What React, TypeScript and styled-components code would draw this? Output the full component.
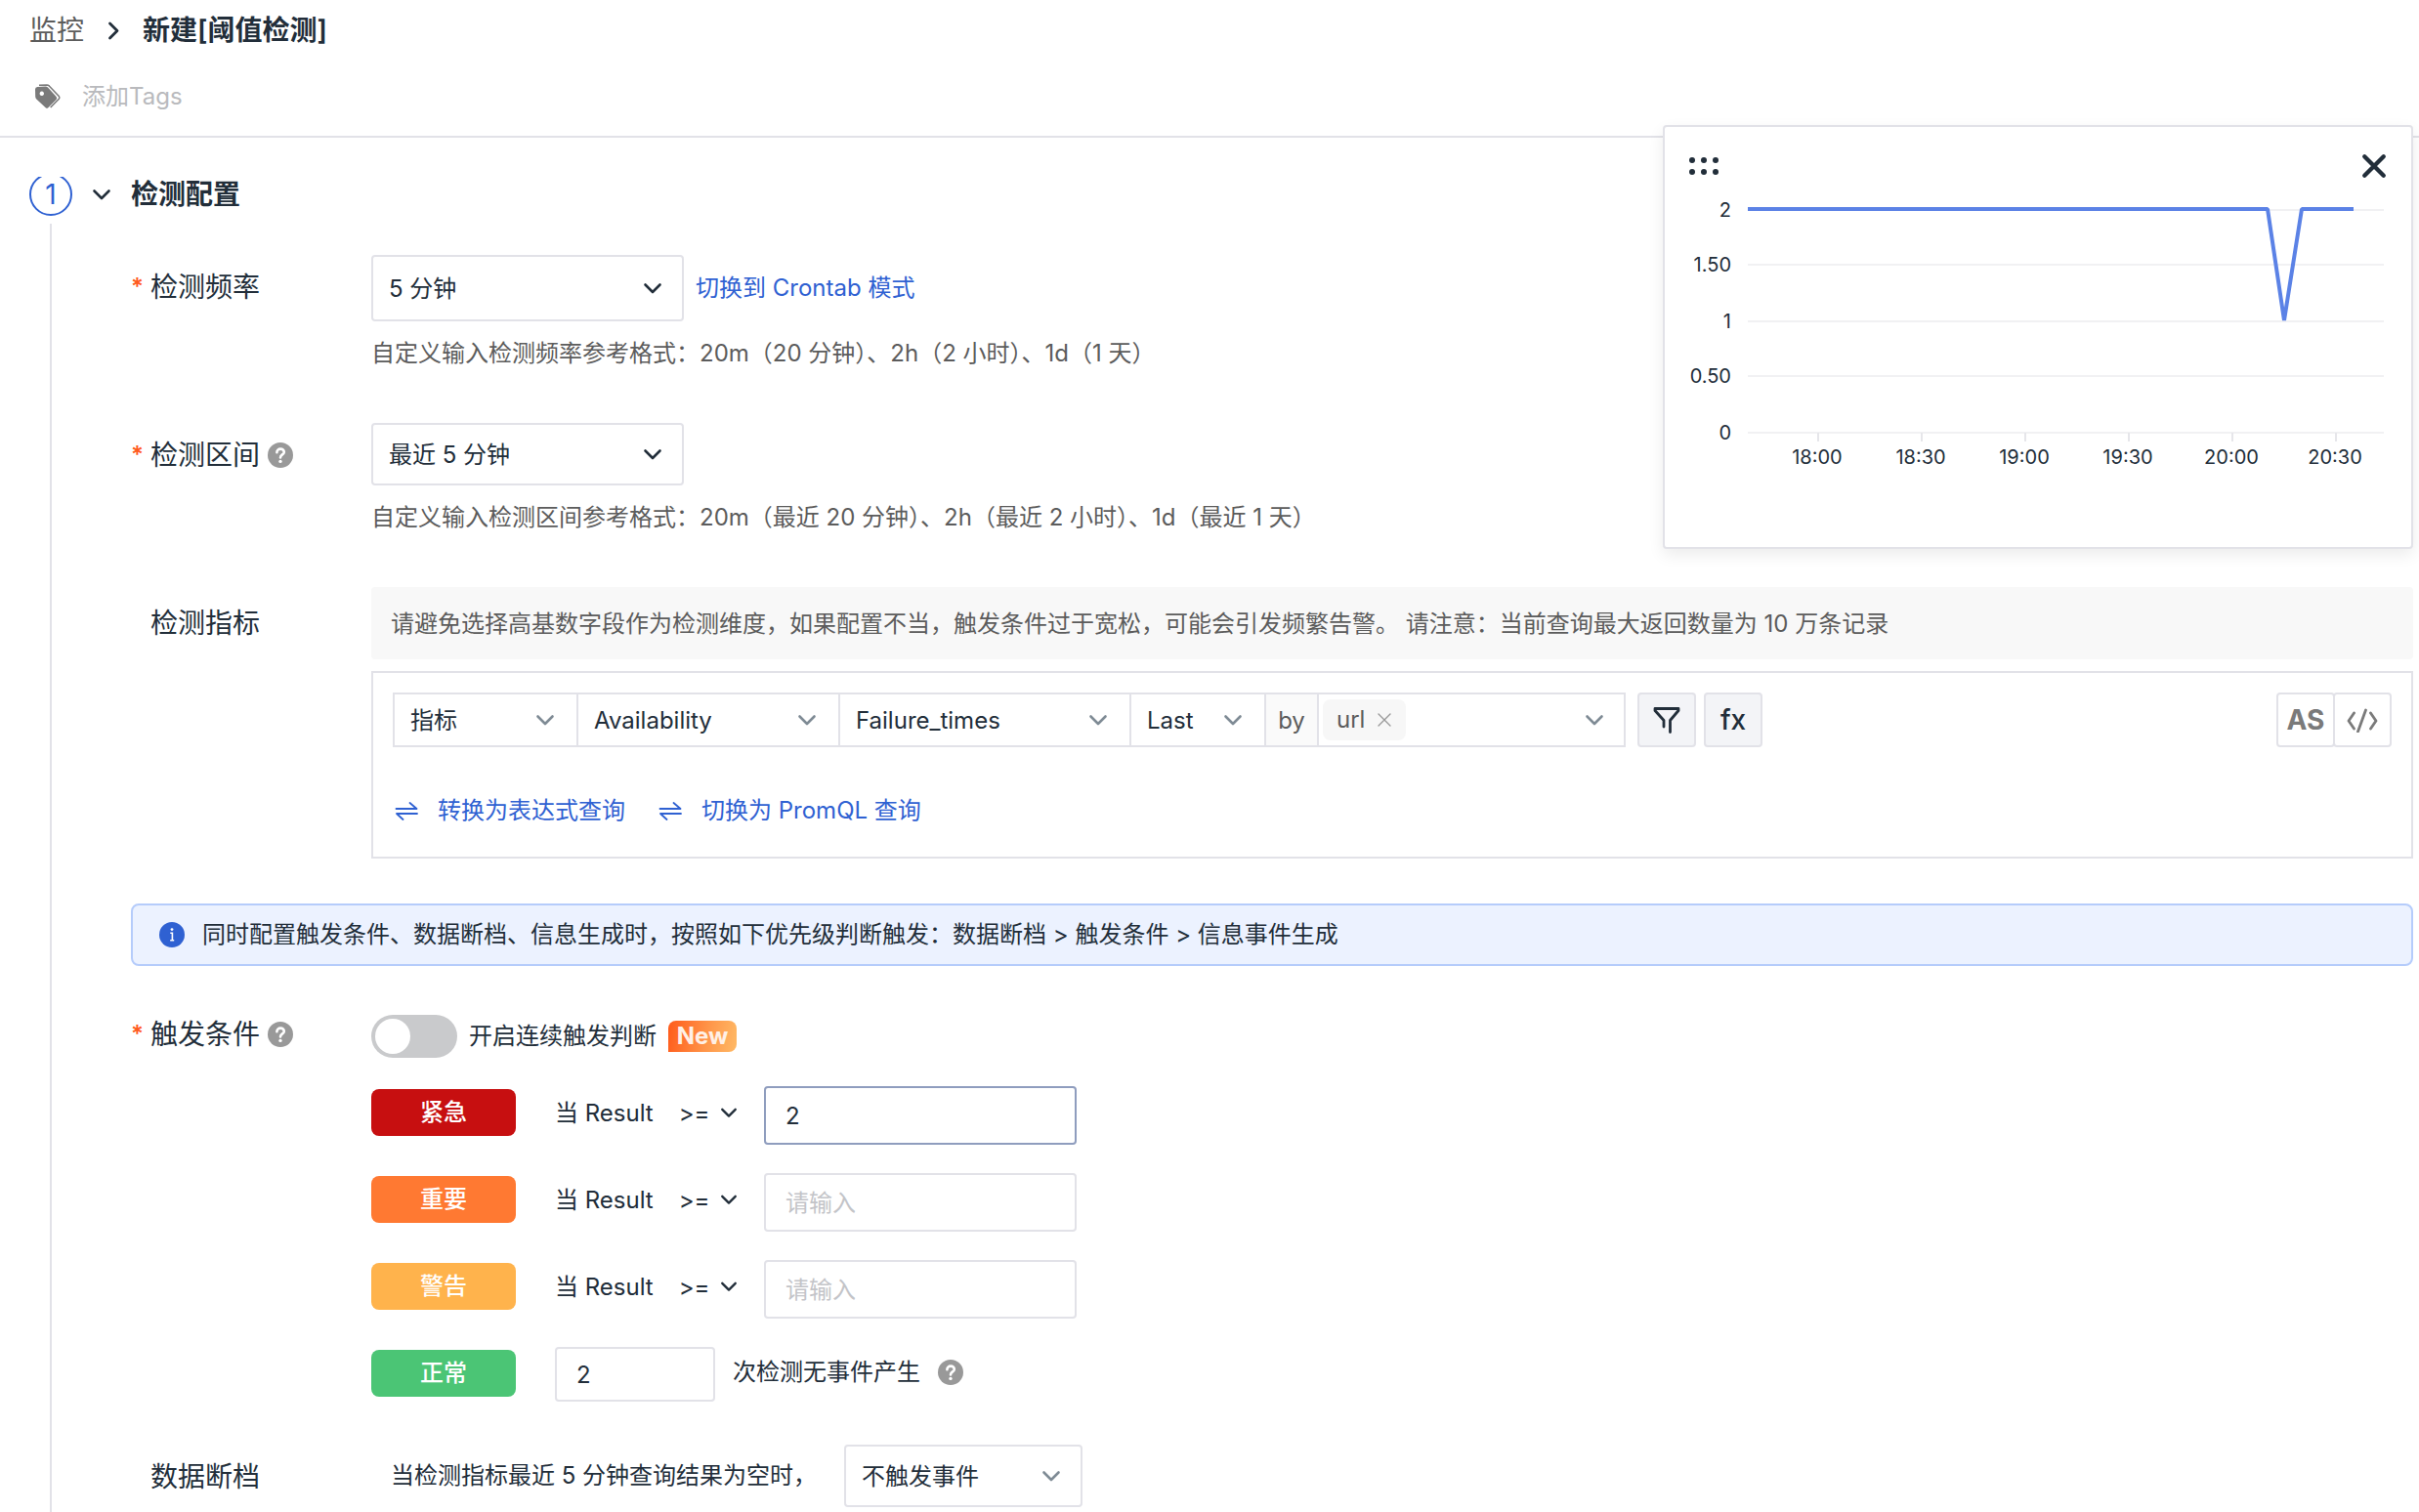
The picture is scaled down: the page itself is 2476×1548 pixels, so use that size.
import React from "react";
import styled, { createGlobalStyle } from "styled-components";

const color = {
  ink: "#222e3a",
  muted: "#5c5c5c",
  faint: "#b9babd",
  line: "#e2e2e8",
  blue: "#2f61d2",
  grey: "#7a7a7a",
  arrow: "#7f8b95",
};

const GlobalStyle = createGlobalStyle`
  *, *::before, *::after { box-sizing: border-box; }
  body { margin: 0; background: #fff; }
  body, button, input, select {
    font-family: Inter, "Noto Sans CJK SC", sans-serif;
    font-size: 24px;
    line-height: 32px;
    color: ${color.ink};
  }
  button { border: 0; padding: 0; background: none; cursor: pointer; }
  svg { display: block; flex: none; }
`;

/* ---------- icons ---------- */

const Stroke = styled.svg`
  fill: none;
  stroke: currentColor;
  stroke-linecap: round;
  stroke-linejoin: round;
`;

const ChevronDown = ({ size = 20 }: { size?: number }) => (
  <Stroke width={size} height={size} viewBox="0 0 20 20" strokeWidth="2.600" aria-hidden="true">
    <path d="M2.500 6.500 10 14 17.500 6.500" />
  </Stroke>
);

const ChevronRight = () => (
  <Stroke width="20" height="20" viewBox="0 0 20 20" strokeWidth="2.800" aria-hidden="true">
    <path d="M6.500 3 14 10.500 6.500 18" />
  </Stroke>
);

const TagIcon = () => (
  <svg width="28" height="26" viewBox="0 0 28 26" aria-hidden="true">
    <path
      fillRule="evenodd"
      fill={color.grey}
      d="M0 5.500Q0 3.200 2.300 3L10.500 2.600Q12 2.600 13 3.600L21.600 13Q22.800 14.500 21.600 15.900L13.300 24.300Q12 25.400 10.700 24.300L1.300 15.500Q.2 14.400 .2 13ZM6.800 7.600a2.200 2.200 0 1 0 .01 0Z"
    />
    <path d="M4 1.200 12 .9Q13.300 .9 14.300 1.900L24.300 12.600Q25.500 14 24.300 15.300L15.700 24" fill="none" stroke={color.grey} strokeWidth="1.500" />
  </svg>
);

const HelpIcon = () => (
  <svg width="26" height="26" viewBox="0 0 26 26" aria-hidden="true">
    <circle cx="13" cy="13" r="13" fill="#999" />
    <path
      d="M9.400 10.200C9.400 8 11 6.600 13.100 6.600S16.800 8 16.800 9.900C16.800 12.400 13 12.500 13 15.400"
      fill="none"
      stroke="#fff"
      strokeWidth="2.600"
      strokeLinecap="round"
    />
    <circle cx="13" cy="19.400" r="1.700" fill="#fff" />
  </svg>
);

const InfoIcon = () => (
  <svg width="26" height="26" viewBox="0 0 26 26" aria-hidden="true">
    <circle cx="13" cy="13" r="13" fill={color.blue} />
    <circle cx="13" cy="7.600" r="1.400" fill="#fff" />
    <path d="M11.300 11.200H13.400V18.600M11.200 18.700H15.200" fill="none" stroke="#fff" strokeWidth="1.600" />
  </svg>
);

const SwapIcon = () => (
  <Stroke width="26" height="20" viewBox="0 0 26 20" strokeWidth="1.800" aria-hidden="true">
    <path d="M3.500 8H24.500L17.500 2M25 13H4L10.500 19" />
  </Stroke>
);

const FilterIcon = () => (
  <Stroke width="28" height="28" viewBox="0 0 28 28" strokeWidth="2.800" aria-hidden="true">
    <path d="M11 21V14.500L2 4.500V2.500H26V4.500L17.500 14.500V26.500" />
  </Stroke>
);

const CodeIcon = () => (
  <Stroke width="32" height="26" viewBox="0 0 32 26" strokeWidth="2.800" aria-hidden="true">
    <path d="M7.500 6 2 14 7.500 22M19.500 3 11.500 25M24.500 6 30 14 24.500 22" />
  </Stroke>
);

const CloseIcon = ({ size, weight }: { size: number; weight: number }) => (
  <Stroke width={size} height={size} viewBox="0 0 24 24" strokeWidth={weight} aria-hidden="true">
    <path d="M3 3 21 21M21 3 3 21" />
  </Stroke>
);

const DragIcon = () => (
  <svg width="30" height="18" viewBox="0 0 30 18" fill="currentColor" aria-hidden="true">
    {[3, 15, 27].map((x) => [3, 15].map((y) => <circle key={`${x}-${y}`} cx={x} cy={y} r="3" />))}
  </svg>
);

/* ---------- page frame ---------- */

const Page = styled.div`
  position: relative;
  display: flex;
  flex-direction: column;
  min-height: 100vh;
`;

const Header = styled.header`
  display: flex;
  flex-direction: column;
  gap: 28px;
  padding: 11px 30px 20px;
  border-bottom: 2px solid ${color.line};
`;

const Breadcrumb = styled.nav`
  display: flex;
  align-items: center;
  gap: 20px;
  height: 40px;
  font-size: 28px;
  a { color: ${color.muted}; text-decoration: none; }
`;

const PageTitle = styled.h1`
  margin: 0;
  font-size: 28px;
  font-weight: 600;
`;

const TagField = styled.label`
  display: flex;
  align-items: center;
  gap: 20px;
  height: 40px;
  padding-left: 6px;
  input {
    flex: 1;
    border: 0;
    outline: 0;
    padding: 0;
    background: none;
  }
  input::placeholder { color: ${color.faint}; opacity: 1; }
`;

const Step = styled.main`
  flex: 1;
  display: grid;
  grid-template-columns: 44px minmax(0, 1fr);
  column-gap: 20px;
  padding: 40px 6px 0 30px;
`;

const Rail = styled.div`
  display: flex;
  flex-direction: column;
  align-items: center;
  gap: 8px;
`;

const StepBadge = styled.div`
  display: flex;
  align-items: flex-end;
  height: 40px;
  overflow: hidden;
  span {
    display: grid;
    place-items: center;
    flex: none;
    width: 44px;
    height: 44px;
    border: 2px solid ${color.blue};
    border-radius: 50%;
    color: ${color.blue};
    font-size: 28px;
  }
`;

const RailLine = styled.div`
  flex: 1;
  width: 2px;
  background: ${color.line};
`;

const SectionHead = styled.div`
  display: flex;
  align-items: center;
  gap: 20px;
  height: 36px;
  margin-bottom: 44px;
  h2 { margin: 0; font-size: 28px; font-weight: 600; }
`;

const Body = styled.form`
  display: flex;
  flex-direction: column;
  padding: 0 0 3px 40px;
`;

/* ---------- form rows ---------- */

const Row = styled.div<{ $after?: number }>`
  display: grid;
  grid-template-columns: 246px minmax(0, 1fr);
  align-items: start;
  margin-bottom: ${(p) => p.$after ?? 0}px;
`;

const RowLabel = styled.div<{ $height?: number }>`
  display: flex;
  align-items: center;
  gap: 8px;
  height: ${(p) => p.$height ?? 66}px;
  font-size: 28px;
`;

const LabelText = styled.label<{ $required?: boolean }>`
  display: flex;
  align-items: center;
  &::before {
    content: "${(p) => (p.$required ? "*" : "")}";
    width: 20px;
    color: #ff5a1f;
    font-size: 24px;
    font-weight: 600;
  }
`;

const Stack = styled.div<{ $gap: number }>`
  display: flex;
  flex-direction: column;
  gap: ${(p) => p.$gap}px;
`;

const Inline = styled.div<{ $gap: number }>`
  display: flex;
  align-items: center;
  gap: ${(p) => p.$gap}px;
`;

const Hint = styled.p`
  margin: 0;
  color: ${color.muted};
`;

const LinkButton = styled.button`
  display: flex;
  align-items: center;
  gap: 20px;
  color: ${color.blue};
`;

const SelectBox = styled.div<{ $width: number; $height: number; $muted?: boolean }>`
  position: relative;
  flex: none;
  width: ${(p) => p.$width}px;
  height: ${(p) => p.$height}px;
  select {
    appearance: none;
    width: 100%;
    height: 100%;
    padding: 2px 48px 0 16px;
    border: 2px solid ${color.line};
    border-radius: 4px;
    background: #fff;
    outline: 0;
  }
  svg {
    position: absolute;
    right: 22px;
    top: calc(50% - 10px);
    pointer-events: none;
    color: ${(p) => (p.$muted ? color.arrow : color.ink)};
  }
`;

type PickerProps = {
  id?: string;
  label?: string;
  value: string;
  width: number;
  height: number;
  muted?: boolean;
};

const Picker = ({ id, label, value, width, height, muted }: PickerProps) => (
  <SelectBox $width={width} $height={height} $muted={muted}>
    <select id={id} aria-label={label} defaultValue={value}>
      <option>{value}</option>
    </select>
    <ChevronDown />
  </SelectBox>
);

/* ---------- metric query ---------- */

const Notice = styled.p`
  margin: 0;
  padding: 22px 20px 20px;
  border-radius: 4px;
  background: #f8f8f8;
  color: ${color.muted};
`;

const QueryBox = styled.div`
  display: flex;
  flex-direction: column;
  gap: 49px;
  padding: 20px 20px 31px;
  border: 2px solid ${color.line};
`;

const QueryBar = styled.div`
  display: flex;
  gap: 8px;
`;

const QueryFields = styled.div`
  display: flex;
  margin-right: 4px;
  border: 2px solid ${color.line};
  border-left: 0;
  > * { border-left: 2px solid ${color.line}; }
  select { border: 0; border-radius: 0; }
`;

const ByLabel = styled.span`
  display: grid;
  place-items: center;
  width: 54px;
  padding-top: 2px;
  background: #fafafa;
  color: ${color.muted};
`;

const GroupField = styled.div`
  display: flex;
  align-items: center;
  justify-content: space-between;
  width: 314px;
  padding: 0 20px 0 4px;
  > button { color: ${color.arrow}; }
`;

const Token = styled.span`
  display: flex;
  align-items: center;
  gap: 12px;
  height: 42px;
  padding: 0 14px;
  border-radius: 8px;
  background: #f7f7f7;
  color: ${color.muted};
  button { color: #999; }
`;

const ToolButton = styled.button`
  display: grid;
  place-items: center;
  width: 60px;
  height: 56px;
  border: 2px solid ${color.line};
  border-radius: 4px;
  background: #f3f4f7;
  font-size: 28px;
  font-weight: 500;
`;

const ToggleGroup = styled.div`
  display: flex;
  margin-left: auto;
`;

const ToggleButton = styled(ToolButton)`
  background: #fff;
  color: ${color.grey};
  font-weight: 700;
  & + & { margin-left: -2px; }
`;

const Alert = styled.div`
  display: flex;
  align-items: center;
  gap: 18px;
  height: 64px;
  padding: 0 27px;
  margin-bottom: 50px;
  border: 2px solid #b5ccfb;
  border-radius: 8px;
  background: #ecf2ff;
`;

/* ---------- trigger conditions ---------- */

const Switch = styled.input`
  appearance: none;
  flex: none;
  width: 88px;
  height: 44px;
  margin: 0;
  padding: 4px;
  border-radius: 22px;
  background: #c9cacc;
  &::before {
    content: "";
    display: block;
    width: 36px;
    height: 36px;
    border-radius: 50%;
    background: #fff;
  }
  &:checked { background: ${color.blue}; }
  &:checked::before { margin-left: 44px; }
`;

const NewBadge = styled.span`
  display: grid;
  place-items: center;
  width: 70px;
  height: 32px;
  border-radius: 8px 8px 8px 0;
  background: linear-gradient(100deg, #ff5a1a, #ff9448 55%, #ffba66);
  color: #fff0e6;
  font-weight: 700;
`;

const LevelRow = styled.div`
  display: flex;
  align-items: flex-start;
`;

const Level = styled.span<{ $bg: string }>`
  display: grid;
  place-items: center;
  width: 148px;
  height: 48px;
  margin: 3px 40px 0 0;
  border-radius: 8px;
  background: ${(p) => p.$bg};
  color: #fff;
  font-weight: 500;
`;

const Condition = styled.div`
  display: flex;
  align-items: center;
  gap: 26px;
  width: 214px;
  height: 56px;
`;

const Operator = styled.div`
  position: relative;
  width: 60px;
  select {
    appearance: none;
    display: block;
    width: 100%;
    border: 0;
    padding: 0;
    background: none;
  }
  svg {
    position: absolute;
    right: 0;
    top: 6px;
    pointer-events: none;
  }
`;

const NumberInput = styled.input<{ $width: number; $height: number; $active?: boolean }>`
  width: ${(p) => p.$width}px;
  height: ${(p) => p.$height}px;
  padding: 0 20px;
  border: 2px solid ${(p) => (p.$active ? "#8f9dbe" : color.line)};
  border-radius: 4px;
  outline: 0;
  &::placeholder { color: #c3c4c8; opacity: 1; }
`;

const Recovery = styled.label`
  display: flex;
  align-items: center;
  gap: 18px;
  height: 52px;
  margin-left: 18px;
`;

const GapText = styled.span`
  width: 484px;
  padding-left: 20px;
`;

const levels = [
  { name: "紧急", bg: "#c70f10", value: "2" },
  { name: "重要", bg: "#ff7932", value: "" },
  { name: "警告", bg: "#ffb34c", value: "" },
];

/* ---------- floating chart ---------- */

const ChartPanel = styled.aside`
  position: absolute;
  top: 128px;
  right: 6px;
  width: 768px;
  height: 434px;
  border: 2px solid ${color.line};
  border-radius: 4px;
  background: #fff;
  box-shadow: 0 6px 16px rgba(0, 0, 0, 0.08);
`;

const ChartHead = styled.div`
  display: flex;
  align-items: center;
  justify-content: space-between;
  height: 68px;
  padding: 12px 25px 0;
`;

const ChartSvg = styled.svg`
  width: 100%;
  text { font-size: 20px; fill: ${color.ink}; }
`;

const yTicks = [
  { text: "2", y: 17 },
  { text: "1.50", y: 73 },
  { text: "1", y: 131 },
  { text: "0.50", y: 187 },
  { text: "0", y: 245 },
];
const xTicks = ["18:00", "18:30", "19:00", "19:30", "20:00", "20:30"];

const Chart = () => (
  <ChartSvg viewBox="0 0 764 300" role="img" aria-label="检测指标趋势">
    {yTicks.map((t) => (
      <g key={t.text}>
        <line x1="85" x2="736" y1={t.y} y2={t.y} stroke="#f1f1f3" strokeWidth="2" />
        <text x="68" y={t.y + 7} textAnchor="end">{t.text}</text>
      </g>
    ))}
    {xTicks.map((t, i) => (
      <g key={t}>
        <line x1={157 + i * 106} x2={157 + i * 106} y1="245" y2="254" stroke="#e6e6ea" strokeWidth="2" />
        <text x={156 + i * 106} y="277" textAnchor="middle">{t}</text>
      </g>
    ))}
    <path d="M85 16H617L634 130 652 16H705" fill="none" stroke="#5b82e6" strokeWidth="4" strokeLinejoin="bevel" />
  </ChartSvg>
);

export default function App() {
  return (
    <Page>
      <GlobalStyle />
      <Header>
        <Breadcrumb>
          <a href="#monitor">监控</a>
          <ChevronRight />
          <PageTitle>新建[阈值检测]</PageTitle>
        </Breadcrumb>
        <TagField>
          <TagIcon />
          <input type="text" placeholder="添加Tags" aria-label="添加Tags" />
        </TagField>
      </Header>

      <Step>
        <Rail>
          <StepBadge>
            <span>1</span>
          </StepBadge>
          <RailLine />
        </Rail>
        <div>
          <SectionHead>
            <button type="button" aria-label="收起">
              <ChevronDown />
            </button>
            <h2>检测配置</h2>
          </SectionHead>

          <Body>
            <Row $after={55}>
              <RowLabel>
                <LabelText htmlFor="frequency" $required>检测频率</LabelText>
              </RowLabel>
              <Stack $gap={17}>
                <Inline $gap={12}>
                  <Picker id="frequency" value="5 分钟" width={320} height={68} />
                  <LinkButton type="button">切换到 Crontab 模式</LinkButton>
                </Inline>
                <Hint>自定义输入检测频率参考格式：20m（20 分钟）、2h（2 小时）、1d（1 天）</Hint>
              </Stack>
            </Row>

            <Row $after={55}>
              <RowLabel>
                <LabelText htmlFor="range" $required>检测区间</LabelText>
                <HelpIcon />
              </RowLabel>
              <Stack $gap={17}>
                <Picker id="range" value="最近 5 分钟" width={320} height={64} />
                <Hint>自定义输入检测区间参考格式：20m（最近 20 分钟）、2h（最近 2 小时）、1d（最近 1 天）</Hint>
              </Stack>
            </Row>

            <Row $after={46}>
              <RowLabel $height={74}>
                <LabelText htmlFor="metric">检测指标</LabelText>
              </RowLabel>
              <Stack $gap={12}>
                <Notice>
                  请避免选择高基数字段作为检测维度，如果配置不当，触发条件过于宽松，可能会引发频繁告警。 请注意：当前查询最大返回数量为 10 万条记录
                </Notice>
                <QueryBox>
                  <QueryBar>
                    <QueryFields>
                      <Picker id="metric" value="指标" width={188} height={52} muted />
                      <Picker label="指标集" value="Availability" width={268} height={52} muted />
                      <Picker label="字段" value="Failure_times" width={298} height={52} muted />
                      <Picker label="聚合" value="Last" width={138} height={52} muted />
                      <ByLabel>by</ByLabel>
                      <GroupField>
                        <Token>
                          url
                          <button type="button" aria-label="移除 url">
                            <CloseIcon size={16} weight={2} />
                          </button>
                        </Token>
                        <button type="button" aria-label="选择维度">
                          <ChevronDown />
                        </button>
                      </GroupField>
                    </QueryFields>
                    <ToolButton type="button" aria-label="筛选">
                      <FilterIcon />
                    </ToolButton>
                    <ToolButton type="button">fx</ToolButton>
                    <ToggleGroup>
                      <ToggleButton type="button">AS</ToggleButton>
                      <ToggleButton type="button" aria-label="代码">
                        <CodeIcon />
                      </ToggleButton>
                    </ToggleGroup>
                  </QueryBar>
                  <Inline $gap={32}>
                    <LinkButton type="button">
                      <SwapIcon />
                      转换为表达式查询
                    </LinkButton>
                    <LinkButton type="button">
                      <SwapIcon />
                      切换为 PromQL 查询
                    </LinkButton>
                  </Inline>
                </QueryBox>
              </Stack>
            </Row>

            <Alert>
              <InfoIcon />
              同时配置触发条件、数据断档、信息生成时，按照如下优先级判断触发：数据断档 &gt; 触发条件 &gt; 信息事件生成
            </Alert>

            <Row $after={44}>
              <RowLabel $height={40}>
                <LabelText htmlFor="continuous" $required>触发条件</LabelText>
                <HelpIcon />
              </RowLabel>
              <Stack $gap={29}>
                <Inline $gap={12}>
                  <Switch id="continuous" type="checkbox" role="switch" />
                  <label htmlFor="continuous">开启连续触发判断</label>
                  <NewBadge>New</NewBadge>
                </Inline>
                {levels.map((level) => (
                  <LevelRow key={level.name}>
                    <Level $bg={level.bg}>{level.name}</Level>
                    <Condition>
                      当 Result
                      <Operator>
                        <select aria-label={`${level.name}比较符`} defaultValue=">=">
                          <option>&gt;=</option>
                        </select>
                        <ChevronDown size={18} />
                      </Operator>
                    </Condition>
                    <NumberInput
                      $width={320}
                      $height={60}
                      $active={level.value !== ""}
                      defaultValue={level.value}
                      placeholder="请输入"
                      aria-label={`${level.name}阈值`}
                    />
                  </LevelRow>
                ))}
                <LevelRow>
                  <Level $bg="#4bc575">正常</Level>
                  <NumberInput id="recovery" $width={164} $height={56} defaultValue="2" />
                  <Recovery htmlFor="recovery">
                    次检测无事件产生
                    <HelpIcon />
                  </Recovery>
                </LevelRow>
              </Stack>
            </Row>

            <Row>
              <RowLabel>
                <LabelText htmlFor="gap">数据断档</LabelText>
              </RowLabel>
              <Inline $gap={0}>
                <GapText>当检测指标最近 5 分钟查询结果为空时，</GapText>
                <Picker id="gap" value="不触发事件" width={244} height={64} muted />
              </Inline>
            </Row>
          </Body>
        </div>
      </Step>

      <ChartPanel>
        <ChartHead>
          <DragIcon />
          <button type="button" aria-label="关闭">
            <CloseIcon size={26} weight={4} />
          </button>
        </ChartHead>
        <Chart />
      </ChartPanel>
    </Page>
  );
}
